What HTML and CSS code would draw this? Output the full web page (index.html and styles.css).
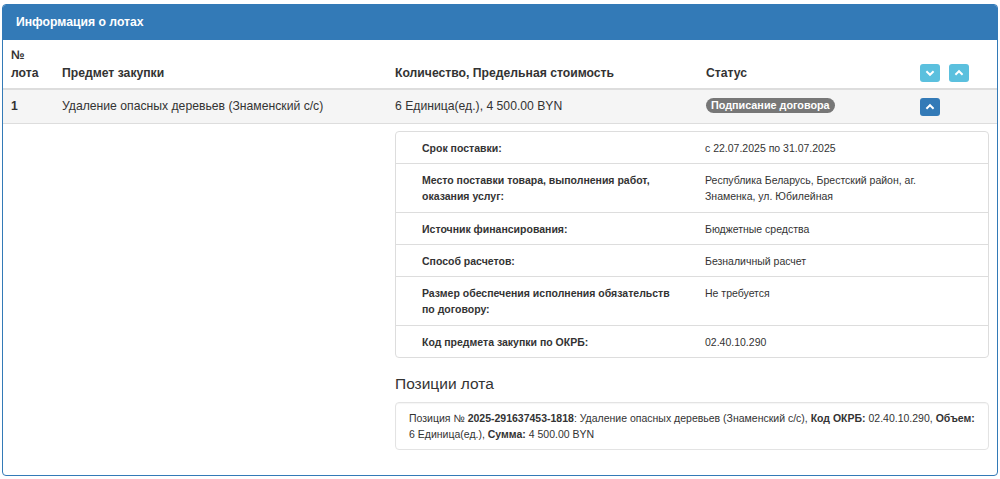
FILE: index.html
```html
<!DOCTYPE html>
<html>
<head>
    <title>Информация о лотах</title>
    <link rel="stylesheet" href="styles.css">
</head>
<body>
    <div class="panel">
        <div class="panel-heading">Информация о лотах</div>
        <table class="lots">
            <colgroup>
                <col class="c-num">
                <col class="c-subject">
                <col class="c-amount">
                <col class="c-status">
                <col class="c-tools">
            </colgroup>
            <thead>
                <tr>
                    <th>№<br>лота</th>
                    <th>Предмет закупки</th>
                    <th>Количество, Предельная стоимость</th>
                    <th>Статус</th>
                    <th>
                        <span class="btn btn-info">
                            <svg viewBox="0 0 10 10"><path d="M2 3.5 5 6.5 8 3.5"/></svg>
                        </span>
                        <span class="btn btn-info">
                            <svg viewBox="0 0 10 10"><path d="M2 6.5 5 3.5 8 6.5"/></svg>
                        </span>
                    </th>
                </tr>
            </thead>
            <tbody>
                <tr class="lot-row">
                    <td><b>1</b></td>
                    <td>Удаление опасных деревьев (Знаменский с/с)</td>
                    <td>6 Единица(ед.), 4 500.00 BYN</td>
                    <td><span class="label">Подписание договора</span></td>
                    <td>
                        <span class="btn btn-primary">
                            <svg viewBox="0 0 10 10"><path d="M2 6.5 5 3.5 8 6.5"/></svg>
                        </span>
                    </td>
                </tr>
                <tr class="lot-details">
                    <td></td>
                    <td></td>
                    <td colspan="3">
                        <table class="details">
                            <tr>
                                <th>Срок поставки:</th>
                                <td>с 22.07.2025 по 31.07.2025</td>
                            </tr>
                            <tr>
                                <th>Место поставки товара, выполнения работ, оказания услуг:</th>
                                <td>Республика Беларусь, Брестский район, аг. Знаменка, ул. Юбилейная</td>
                            </tr>
                            <tr>
                                <th>Источник финансирования:</th>
                                <td>Бюджетные средства</td>
                            </tr>
                            <tr>
                                <th>Способ расчетов:</th>
                                <td>Безналичный расчет</td>
                            </tr>
                            <tr>
                                <th>Размер обеспечения исполнения обязательств по договору:</th>
                                <td>Не требуется</td>
                            </tr>
                            <tr>
                                <th>Код предмета закупки по ОКРБ:</th>
                                <td>02.40.10.290</td>
                            </tr>
                        </table>

                        <h4 class="positions-title">Позиции лота</h4>
                        <div class="well">
                            Позиция № <b>2025-291637453-1818</b>: Удаление опасных деревьев (Знаменский с/с), <b>Код ОКРБ:</b> 02.40.10.290, <b>Объем:</b> 6 Единица(ед.), <b>Сумма:</b> 4 500.00 BYN
                        </div>
                    </td>
                </tr>
            </tbody>
        </table>
    </div>
</body>
</html>
```

FILE: styles.css
```css
body {
    font-family: 'Liberation Sans', Arial, sans-serif;
    font-size: 12.2px;
    color: #333;
    margin: 0;
    padding: 4px 2px 0 2px;
    background: #fff;
}

.panel {
    border: 1px solid #337ab7;
    border-radius: 4px;
    overflow: hidden;
}

.panel-heading {
    background: #337ab7;
    color: #fff;
    font-weight: bold;
    font-size: 12.2px;
    line-height: 15px;
    padding: 10px 13px;
}

.lots {
    width: 100%;
    border-collapse: collapse;
    table-layout: fixed;
}

.c-num { width: 51px; }
.c-subject { width: 333px; }
.c-amount { width: 311px; }
.c-status { width: 214px; }

.lots > thead > tr > th {
    text-align: left;
    vertical-align: bottom;
    line-height: 18px;
    padding: 6px 8px;
    border-bottom: 2px solid #ddd;
}

.lots > tbody > tr > td {
    vertical-align: top;
    line-height: 18px;
    padding: 7px 8px;
    border-top: 1px solid #ddd;
}

.lot-row {
    background: #f5f5f5;
}

.lots > tbody > .lot-details > td {
    padding: 7px 8px 0 8px;
}

.label {
    display: inline-block;
    background: #777;
    color: #fff;
    font-size: 10.8px;
    font-weight: bold;
    line-height: 13px;
    padding: 1px 5px;
    border-radius: 8px;
    vertical-align: 1px;
}

.btn {
    display: inline-block;
    width: 20px;
    height: 18px;
    border-radius: 3px;
    vertical-align: middle;
    margin-right: 6px;
}

.btn svg {
    display: block;
    width: 12px;
    height: 12px;
    margin: 3px auto 0;
    fill: none;
    stroke: #fff;
    stroke-width: 1.6;
}

.btn-info {
    background: #5bc0de;
}

.btn-primary {
    background: #337ab7;
}

.details {
    width: 100%;
    border-collapse: separate;
    border-spacing: 0;
    border: 1px solid #ddd;
    border-radius: 4px;
    font-size: 10.5px;
    line-height: 16px;
}

.details th,
.details td {
    text-align: left;
    vertical-align: top;
    padding: 8px 0 7.4px 0;
    border-top: 1px solid #ddd;
}

.details tr:first-child th,
.details tr:first-child td {
    border-top: none;
}

.details th {
    width: 253px;
    padding-left: 26px;
    padding-right: 30px;
}

.details td {
    padding-right: 44px;
}

.positions-title {
    font-size: 15.5px;
    font-weight: normal;
    line-height: 20px;
    margin: 16px 0 8px 0;
}

.well {
    border: 1px solid #e3e3e3;
    border-radius: 4px;
    padding: 7px 13px;
    font-size: 10.5px;
    line-height: 16px;
    margin-bottom: 25px;
    box-shadow: inset 0 1px 1px rgba(0, 0, 0, 0.04);
}
```
